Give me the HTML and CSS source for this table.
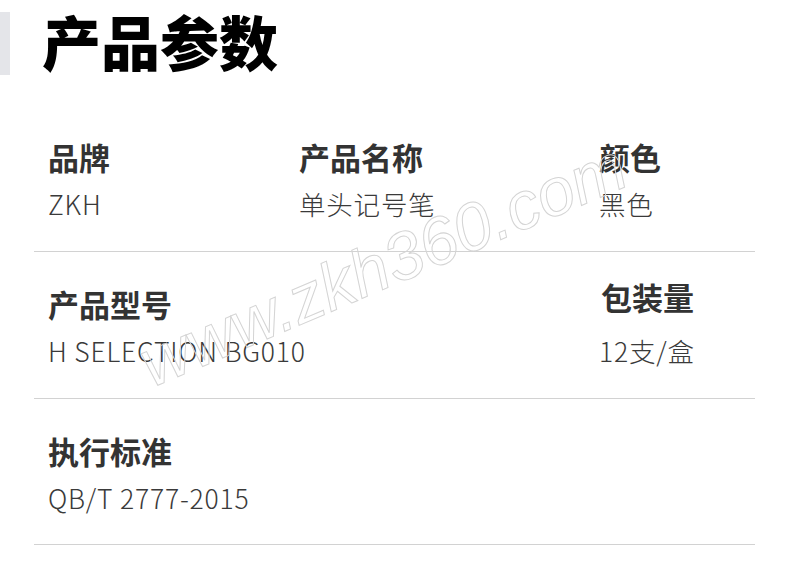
FILE: index.html
```html
<!DOCTYPE html>
<html lang="zh">
<head>
<meta charset="utf-8">
<title>产品参数</title>
<link rel="stylesheet" href="styles.css">
</head>
<body>
<div class="page">
  <header class="head">
    <span class="bar"></span>
    <h1 class="title">产品参数</h1>
  </header>
  <section class="params">
    <div class="row">
      <div class="cell c1"><div class="label">品牌</div><div class="value">ZKH</div></div>
      <div class="cell c2"><div class="label">产品名称</div><div class="value">单头记号笔</div></div>
      <div class="cell c3"><div class="label">颜色</div><div class="value">黑色</div></div>
    </div>
    <div class="row">
      <div class="cell c1 wide"><div class="label">产品型号</div><div class="value">H SELECTION BG010</div></div>
      <div class="cell c3 raised"><div class="label">包装量</div><div class="value">12支/盒</div></div>
    </div>
    <div class="row last">
      <div class="cell c1 wide"><div class="label">执行标准</div><div class="value">QB/T 2777-2015</div></div>
    </div>
  </section>
  <div class="watermark">www.zkh360.com</div>
</div>
</body>
</html>
```
FILE: styles.css
```css
html, body {
  margin: 0;
  padding: 0;
  background: #fff;
}
.page {
  position: relative;
  width: 800px;
  height: 567px;
  overflow: hidden;
  font-family: "Noto Sans CJK SC", "Noto Sans", sans-serif;
}
.head {
  display: flex;
  align-items: flex-start;
  height: 105px;
}
.bar {
  width: 10px;
  height: 63px;
  margin-top: 12px;
  background: #e4e5e9;
}
.title {
  margin: 0 0 0 32px;
  font-size: 59px;
  line-height: 82px;
  font-weight: 900;
  color: #000;
}
.params {
  margin: 0 45px 0 34px;
}
.row {
  display: grid;
  grid-template-columns: 251px 300px 1fr;
  padding: 36px 0 34px 14px;
  border-bottom: 1px solid #d2d2d2;
}
.row.last { padding-bottom: 33px; }
.cell.c1 { grid-column: 1; }
.cell.c2 { grid-column: 2; }
.cell.c3 { grid-column: 3; }
.cell.wide { grid-column: 1 / 3; }
.label {
  font-size: 31px;
  line-height: 31px;
  font-weight: 700;
  color: #333;
}
.value {
  margin-top: 18px;
  font-size: 26.5px;
  line-height: 27px;
  letter-spacing: 0.8px;
  font-weight: 300;
  color: #3a3a3a;
}
.raised { margin-left: 2px; }
.raised .label { margin-top: -7px; }
.raised .value { margin-top: 25px; margin-left: -2px; }
.watermark {
  position: absolute;
  left: 156px;
  top: 330px;
  transform: rotate(-23deg);
  transform-origin: 0 100%;
  font-family: "Liberation Sans", Arial, sans-serif;
  font-style: italic;
  font-size: 67px;
  line-height: 67px;
  color: transparent;
  -webkit-text-stroke: 1px #d4d4d4;
  white-space: nowrap;
  pointer-events: none;
}
```
